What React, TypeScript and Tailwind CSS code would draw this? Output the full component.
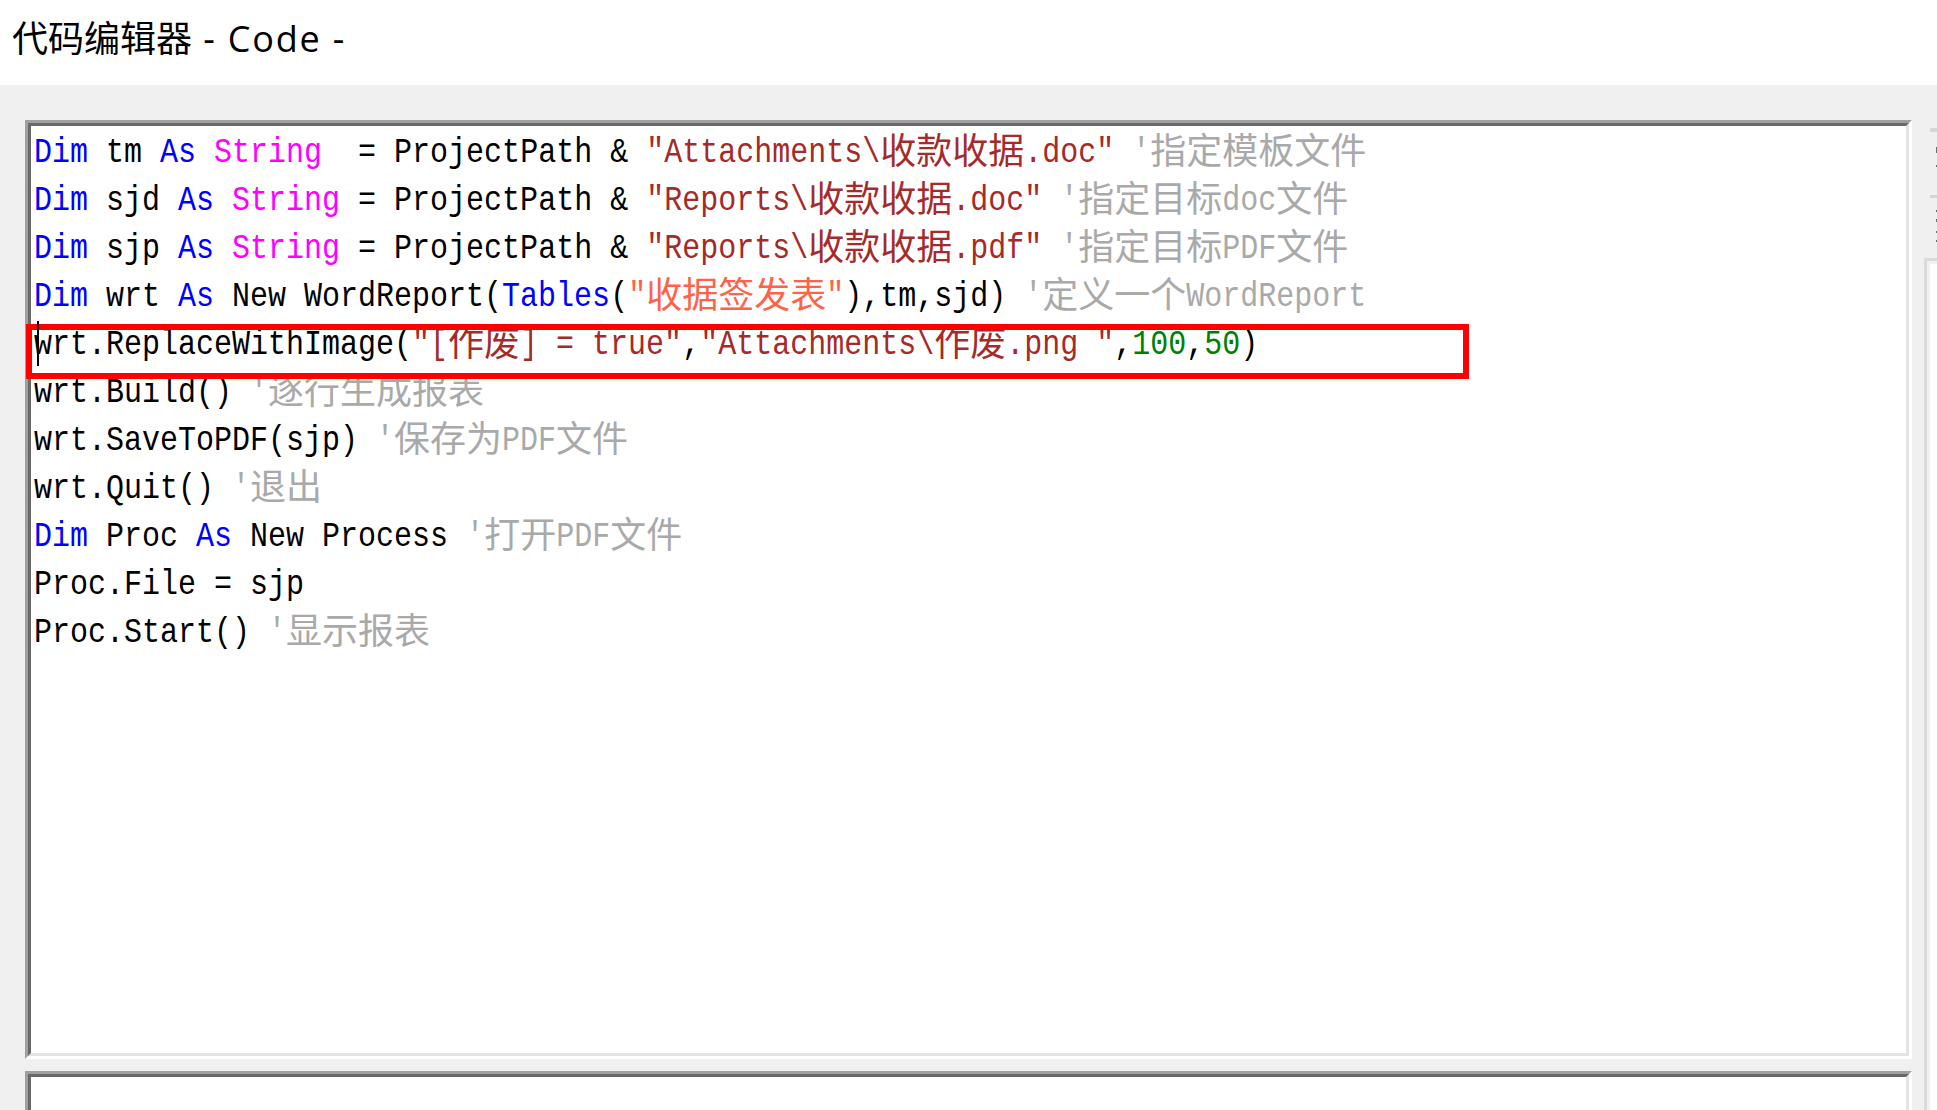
import React from 'react'

type Seg = [string, string]

const colour: Record<string, string> = {
  x: 'text-black',
  k: 'text-[#0000ff]',
  t: 'text-[#ff00ff]',
  s: 'text-[#a52a2a]',
  o: 'text-[#ff6347]',
  c: 'text-[#a9a9a9]',
  n: 'text-[#008000]',
}

const lines: Seg[][] = [
  [['k', 'Dim'], ['x', ' tm '], ['k', 'As'], ['x', ' '], ['t', 'String'], ['x', '  = ProjectPath & '], ['s', '"Attachments\\收款收据.doc"'], ['x', ' '], ['c', "'指定模板文件"]],
  [['k', 'Dim'], ['x', ' sjd '], ['k', 'As'], ['x', ' '], ['t', 'String'], ['x', ' = ProjectPath & '], ['s', '"Reports\\收款收据.doc"'], ['x', ' '], ['c', "'指定目标doc文件"]],
  [['k', 'Dim'], ['x', ' sjp '], ['k', 'As'], ['x', ' '], ['t', 'String'], ['x', ' = ProjectPath & '], ['s', '"Reports\\收款收据.pdf"'], ['x', ' '], ['c', "'指定目标PDF文件"]],
  [['k', 'Dim'], ['x', ' wrt '], ['k', 'As'], ['x', ' New WordReport('], ['k', 'Tables'], ['x', '('], ['o', '"收据签发表"'], ['x', '),tm,sjd) '], ['c', "'定义一个WordReport"]],
  [['x', 'wrt.ReplaceWithImage('], ['s', '"[作废] = true"'], ['x', ','], ['s', '"Attachments\\作废.png "'], ['x', ','], ['n', '100'], ['x', ','], ['n', '50'], ['x', ')']],
  [['x', 'wrt.Build() '], ['c', "'逐行生成报表"]],
  [['x', 'wrt.SaveToPDF(sjp) '], ['c', "'保存为PDF文件"]],
  [['x', 'wrt.Quit() '], ['c', "'退出"]],
  [['k', 'Dim'], ['x', ' Proc '], ['k', 'As'], ['x', ' New Process '], ['c', "'打开PDF文件"]],
  [['x', 'Proc.File = sjp']],
  [['x', 'Proc.Start() '], ['c', "'显示报表"]],
]

// split a run so that CJK text gets a full-width font, latin stays on the 18px mono grid
function Run({ text }: { text: string }) {
  const parts = text.split(/([\u3400-\u9fff]+)/)
  return (
    <>
      {parts.map((p, i) =>
        p === '' ? null : /[\u3400-\u9fff]/.test(p) ? (
          <span key={i} className="font-['Noto_Sans_CJK_SC',sans-serif] text-[36px] leading-none align-[-3px]">
            {p}
          </span>
        ) : (
          <span key={i} className="inline-block scale-y-[1.18]">
            {p}
          </span>
        ),
      )}
    </>
  )
}

function CodeLine({ segs }: { segs: Seg[] }) {
  return (
    <div className="h-[48px] leading-[48px] whitespace-pre">
      {segs.map(([c, t], i) => (
        <span key={i} className={colour[c]}>
          <Run text={t} />
        </span>
      ))}
    </div>
  )
}

function SunkenBox({ className, children }: { className?: string; children?: React.ReactNode }) {
  return (
    <div className={`relative border-[3px] border-t-[#a0a0a0] border-l-[#a0a0a0] border-b-white border-r-white ${className ?? ''}`}>
      <div className="h-full border-[3px] border-t-[#696969] border-l-[#696969] border-b-[#e3e3e3] border-r-[#e3e3e3] bg-white">
        {children}
      </div>
    </div>
  )
}

export default function App() {
  return (
    <div className="w-[1937px] h-[1110px] overflow-hidden bg-[#f0f0f0] flex flex-col">
      <header className="h-[85px] shrink-0 bg-white pl-3 pt-[17px]">
        <h1 className="text-[36px] leading-[44px] text-black font-['Open_Sans','Noto_Sans_CJK_SC',sans-serif] whitespace-pre">
          <span>代码编辑器</span>
          <span className="tracking-[1.8px]"> - Code -</span>
        </h1>
      </header>

      <div className="flex flex-1 min-h-0">
        <div className="w-[1912px] shrink-0 pl-[25px] pt-[35px] flex flex-col">
          <SunkenBox className="h-[939px] shrink-0">
            <div className="pl-[3px] pt-[3px] font-['Liberation_Mono',monospace] text-[30px]">
              {lines.map((segs, i) => (
                <CodeLine key={i} segs={segs} />
              ))}
            </div>
            {/* highlight box and caret sit over the text */}
            <div className="absolute left-[-2px] top-[201px] w-[1443px] h-[55px] border-[6px] border-[#ff0000]" />
            <div className="absolute left-[9px] top-[198px] w-[2px] h-[45px] bg-black" />
          </SunkenBox>
          <SunkenBox className="mt-[12px] h-[120px] shrink-0" />
        </div>

        <aside className="ml-[12px] flex-1 flex flex-col">
          <div className="mt-[43px] ml-[6px] h-[4px] bg-[#d6d6d6]" />
          <div className="mt-[15px] ml-[12px] w-[2px] h-[6px] bg-[#6d6d6d]" />
          <div className="mt-[12px] ml-[12px] w-[2px] h-[2px] bg-[#6d6d6d]" />
          <div className="mt-[28px] ml-[6px] h-[3px] bg-[#d6d6d6]" />
          <div className="mt-[12px] ml-[12px] w-[2px] h-[2px] bg-[#6d6d6d]" />
          <div className="mt-[7px] ml-[12px] w-[2px] h-[3px] bg-[#6d6d6d]" />
          <div className="mt-[9px] ml-[12px] w-[2px] h-[2px] bg-[#6d6d6d]" />
          <div className="mt-[7px] ml-[12px] w-[2px] h-[2px] bg-[#6d6d6d]" />
          <div className="mt-[16px] flex-1 border-t-[3px] border-l-[3px] border-[#dadada] pl-[3px] pt-[3px]">
            <div className="h-full bg-white" />
          </div>
        </aside>
      </div>
    </div>
  )
}
